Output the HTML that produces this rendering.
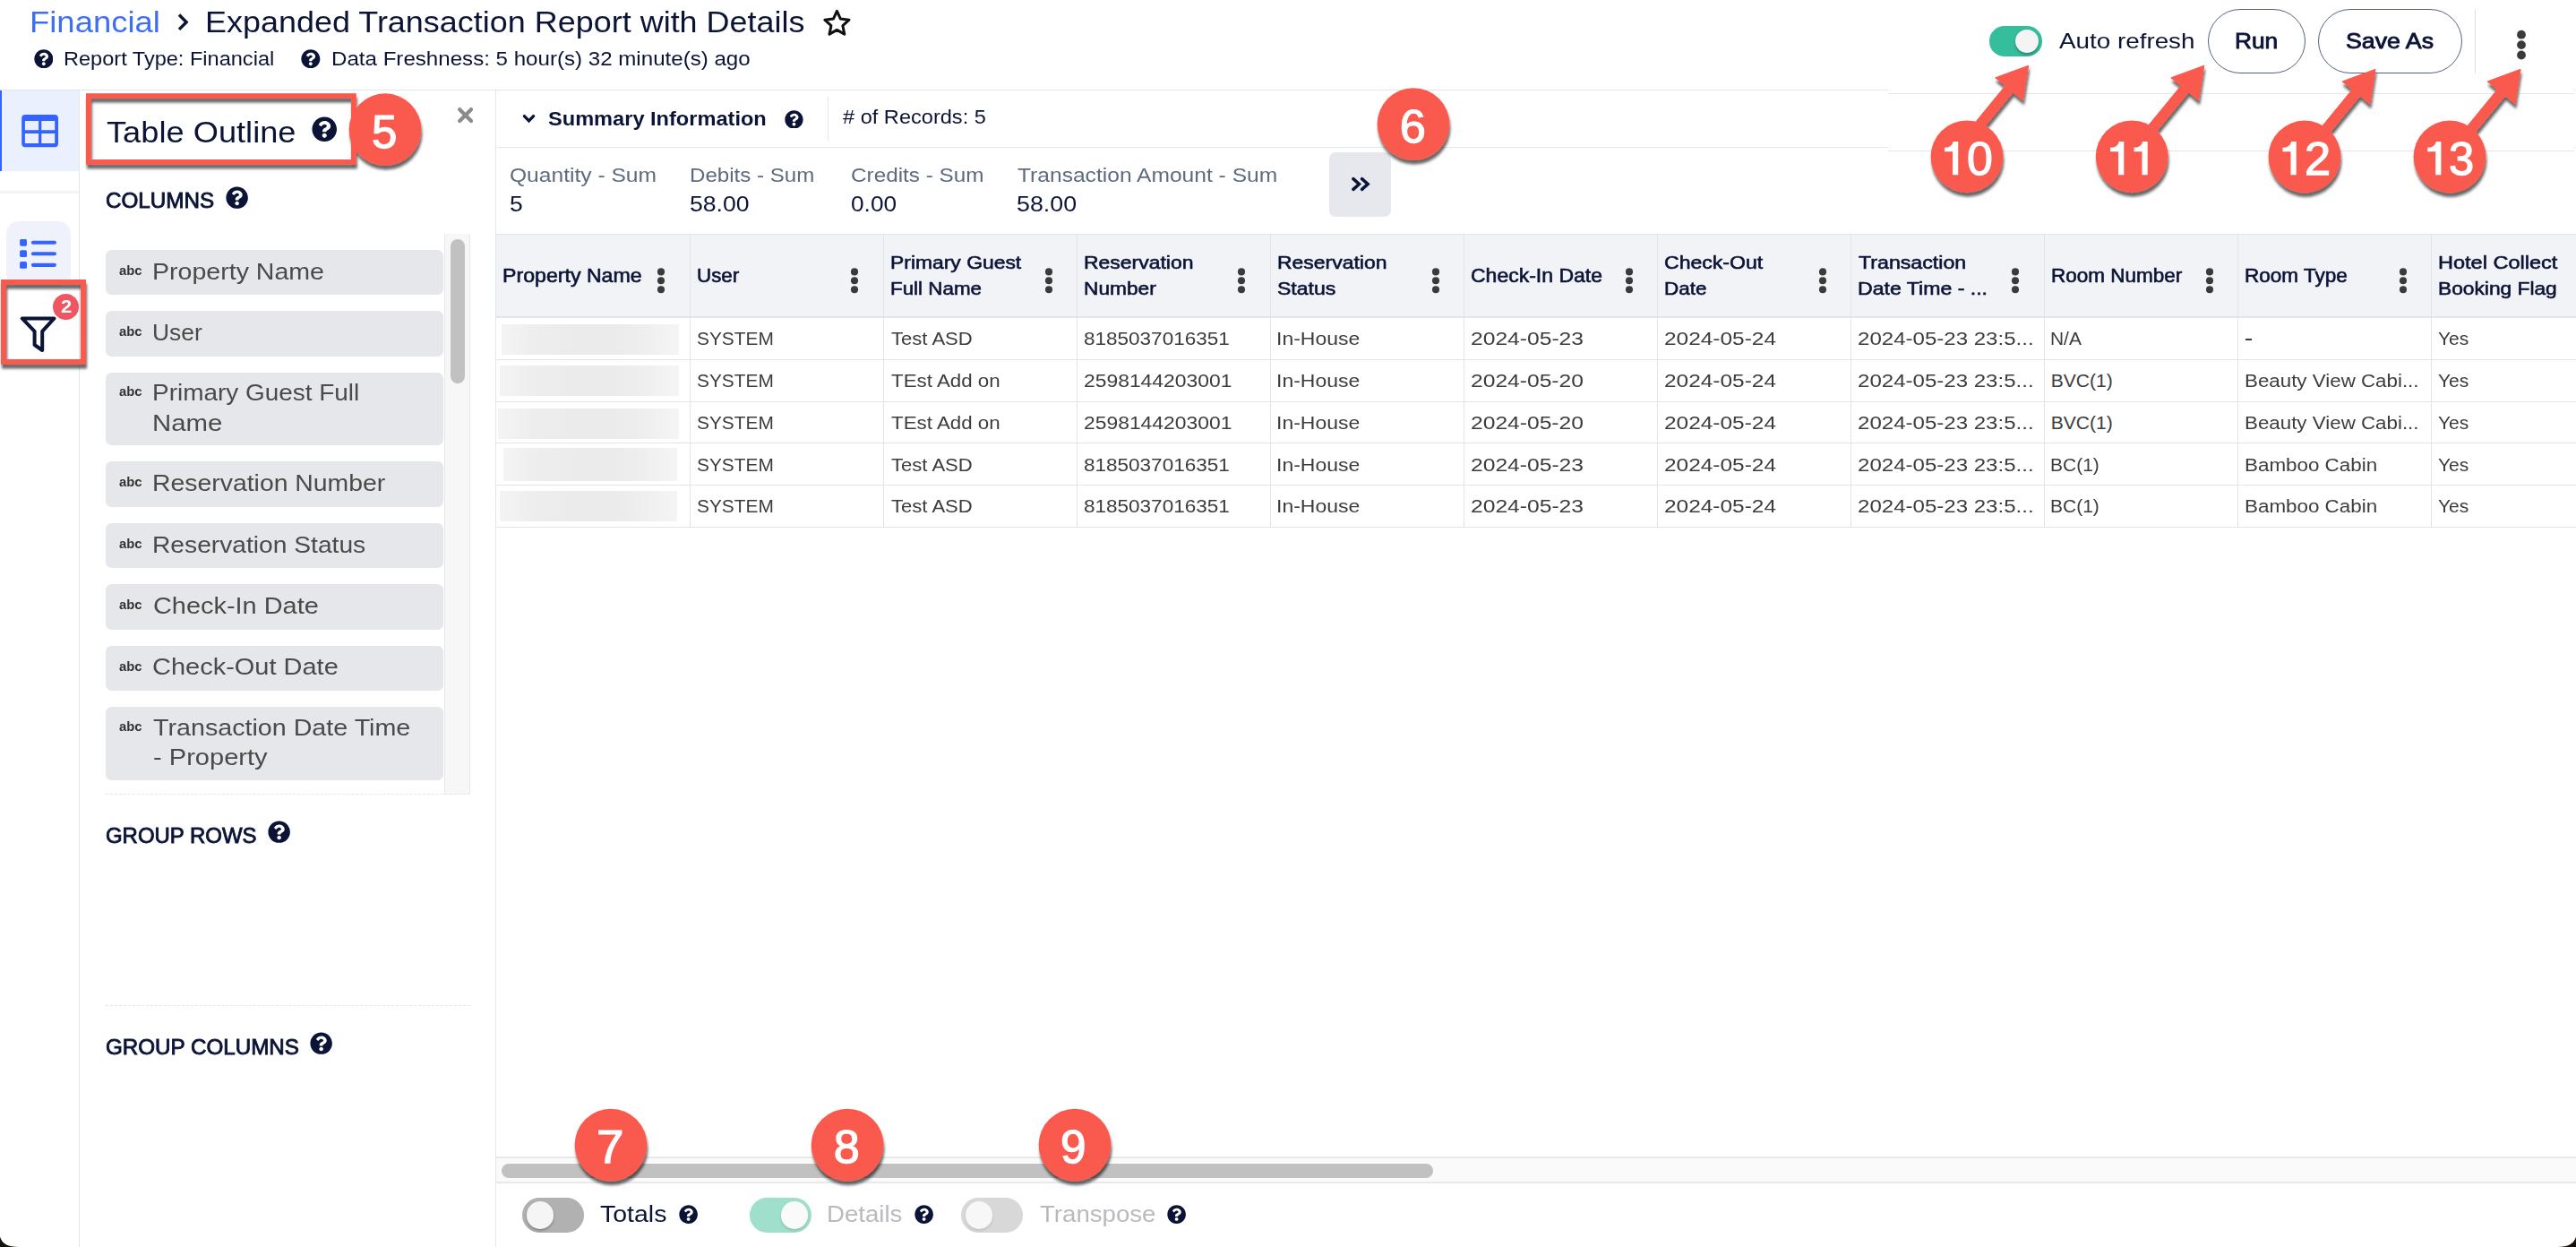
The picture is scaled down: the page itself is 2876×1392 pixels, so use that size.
<!DOCTYPE html>
<html><head><meta charset="utf-8"><title>Expanded Transaction Report with Details</title>
<style>
html,body{margin:0;padding:0;background:#fff;}
body{width:2876px;height:1392px;position:relative;overflow:hidden;font-family:"Liberation Sans",sans-serif;}
#root{position:absolute;left:0;top:0;width:2876px;height:1392px;overflow:hidden;}
#root>div,#root>svg,#root>span{position:absolute;}
.t{white-space:nowrap;line-height:1;transform-origin:0 0;display:block;}
</style></head><body><div id="root">
<div style="left:0px;top:99.75px;width:2108px;height:1.0px;background:#e4e6ee;"></div>
<div style="left:553px;top:163.75px;width:1555px;height:1.0px;background:#e4e6ee;"></div>
<div style="left:2874px;top:99.75px;width:2px;height:1.0px;background:#e4e6ee;"></div>
<div style="left:2874px;top:163.75px;width:2px;height:1.0px;background:#e4e6ee;"></div>
<div style="left:2108px;top:103.75px;width:766px;height:1.0px;background:#e4e6ee;"></div>
<div style="left:2108px;top:167.75px;width:766px;height:1.0px;background:#e4e6ee;"></div>
<div style="left:0px;top:100.75px;width:88px;height:90.25px;background:#eaf0fe;"></div>
<div style="left:0px;top:100.75px;width:2px;height:90.25px;background:#3563ff;"></div>
<div style="left:0px;top:213px;width:88px;height:2.6px;background:#f4f4f5;"></div>
<div style="left:7.2px;top:247.2px;width:71.7px;height:72.8px;background:#eff2fb;border-radius:14.4px;"></div>
<div style="left:88px;top:100.75px;width:1px;height:1291.25px;background:#e4e6ee;"></div>
<div style="left:552.8px;top:100.75px;width:1.0px;height:1291.25px;background:#e4e6ee;"></div>
<svg style="left:20px;top:124px" width="50" height="44" viewBox="20 124 50 44"><path fill="#3563ff" fill-rule="evenodd" d="M28.2 128.1H61a4 4 0 0 1 4 4V160.2a4 4 0 0 1-4 4H28.2a4 4 0 0 1-4-4V132.1a4 4 0 0 1 4-4ZM27.9 134.9V145.3H43.1V134.9ZM46.3 134.9V145.3H61.2V134.9ZM27.9 148.9V160H43.1V148.9ZM46.3 148.9V160H61.2V148.9Z"/></svg>
<svg style="left:20px;top:262px" width="50" height="42" viewBox="20 262 50 42"><g fill="#3563ff"><rect x="22.1" y="266.9" width="7.9" height="7.8" rx="1.6"/><rect x="22.1" y="279.2" width="7.9" height="7.8" rx="1.6"/><rect x="22.1" y="292" width="7.9" height="7.8" rx="1.6"/></g><g stroke="#3563ff" stroke-width="4.1" stroke-linecap="round"><path d="M36.9 270.75H60.9M36.9 283.3H60.9M36.9 295.85H60.9"/></g></svg>
<svg style="left:18px;top:348px" width="50" height="50" viewBox="18 348 50 50"><path d="M24.7 355.4H60.5L47.2 369.9V391L38.6 385V369.9Z" fill="none" stroke="#0b1437" stroke-width="4" stroke-linejoin="round"/></svg>
<div style="left:58.9px;top:327.8px;width:29.2px;height:29.2px;background:#ef5662;border-radius:50%;z-index:12;"></div>
<svg style="left:195px;top:14px" width="22" height="24" viewBox="195 14 22 24"><path d="M200 16.5L208.1 24.7L200 32.9" fill="none" stroke="#0b1437" stroke-width="3.4"/></svg>
<svg style="left:914px;top:6px" width="42" height="40" viewBox="914 6 42 40"><polygon points="934.40,12.30 938.40,21.10 948.00,22.18 940.87,28.70 942.81,38.17 934.40,33.40 925.99,38.17 927.93,28.70 920.80,22.18 930.40,21.10" fill="none" stroke="#111" stroke-width="3" stroke-linejoin="round"/></svg>
<svg style="left:37.77px;top:54.76px" width="21.67" height="21.67" viewBox="0 0 512 512"><path fill="#0b1437" d="M504 256c0 136.997-111.043 248-248 248S8 392.997 8 256C8 119.083 119.043 8 256 8s248 111.083 248 248zM262.655 90c-54.497 0-89.255 22.957-116.549 63.758-3.536 5.286-2.353 12.415 2.715 16.258l34.699 26.31c5.205 3.947 12.621 3.008 16.665-2.122 17.864-22.658 30.113-35.797 57.303-35.797 20.429 0 45.698 13.148 45.698 32.958 0 14.976-12.363 22.667-32.534 33.976C247.128 238.528 216 254.941 216 296v4c0 6.627 5.373 12 12 12h56c6.627 0 12-5.373 12-12v-1.333c0-28.462 83.186-29.647 83.186-106.667 0-58.002-60.165-102-116.531-102zM256 338c-25.365 0-46 20.635-46 46 0 25.364 20.635 46 46 46s46-20.636 46-46c0-25.365-20.635-46-46-46z"/></svg>
<svg style="left:336.27px;top:54.76px" width="21.67" height="21.67" viewBox="0 0 512 512"><path fill="#0b1437" d="M504 256c0 136.997-111.043 248-248 248S8 392.997 8 256C8 119.083 119.043 8 256 8s248 111.083 248 248zM262.655 90c-54.497 0-89.255 22.957-116.549 63.758-3.536 5.286-2.353 12.415 2.715 16.258l34.699 26.31c5.205 3.947 12.621 3.008 16.665-2.122 17.864-22.658 30.113-35.797 57.303-35.797 20.429 0 45.698 13.148 45.698 32.958 0 14.976-12.363 22.667-32.534 33.976C247.128 238.528 216 254.941 216 296v4c0 6.627 5.373 12 12 12h56c6.627 0 12-5.373 12-12v-1.333c0-28.462 83.186-29.647 83.186-106.667 0-58.002-60.165-102-116.531-102zM256 338c-25.365 0-46 20.635-46 46 0 25.364 20.635 46 46 46s46-20.636 46-46c0-25.365-20.635-46-46-46z"/></svg>
<svg style="left:348.26px;top:130.06px" width="28.48" height="28.48" viewBox="0 0 512 512"><path fill="#0b1437" d="M504 256c0 136.997-111.043 248-248 248S8 392.997 8 256C8 119.083 119.043 8 256 8s248 111.083 248 248zM262.655 90c-54.497 0-89.255 22.957-116.549 63.758-3.536 5.286-2.353 12.415 2.715 16.258l34.699 26.31c5.205 3.947 12.621 3.008 16.665-2.122 17.864-22.658 30.113-35.797 57.303-35.797 20.429 0 45.698 13.148 45.698 32.958 0 14.976-12.363 22.667-32.534 33.976C247.128 238.528 216 254.941 216 296v4c0 6.627 5.373 12 12 12h56c6.627 0 12-5.373 12-12v-1.333c0-28.462 83.186-29.647 83.186-106.667 0-58.002-60.165-102-116.531-102zM256 338c-25.365 0-46 20.635-46 46 0 25.364 20.635 46 46 46s46-20.636 46-46c0-25.365-20.635-46-46-46z"/></svg>
<svg style="left:506px;top:116px" width="28" height="26" viewBox="506 116 28 26"><path d="M513.2 122.15L526 134.95M526 122.15L513.2 134.95" stroke="#8b8b8b" stroke-width="4.3" stroke-linecap="round"/></svg>
<svg style="left:251.96px;top:208.16px" width="25.28" height="25.28" viewBox="0 0 512 512"><path fill="#0b1437" d="M504 256c0 136.997-111.043 248-248 248S8 392.997 8 256C8 119.083 119.043 8 256 8s248 111.083 248 248zM262.655 90c-54.497 0-89.255 22.957-116.549 63.758-3.536 5.286-2.353 12.415 2.715 16.258l34.699 26.31c5.205 3.947 12.621 3.008 16.665-2.122 17.864-22.658 30.113-35.797 57.303-35.797 20.429 0 45.698 13.148 45.698 32.958 0 14.976-12.363 22.667-32.534 33.976C247.128 238.528 216 254.941 216 296v4c0 6.627 5.373 12 12 12h56c6.627 0 12-5.373 12-12v-1.333c0-28.462 83.186-29.647 83.186-106.667 0-58.002-60.165-102-116.531-102zM256 338c-25.365 0-46 20.635-46 46 0 25.364 20.635 46 46 46s46-20.636 46-46c0-25.365-20.635-46-46-46z"/></svg>
<div style="left:495.5px;top:261px;width:29.0px;height:625.5px;background:#f7f7f7;border-left:1px solid #e8e8e8;border-right:1px solid #e8e8e8;box-sizing:border-box;"></div>
<div style="left:503.3px;top:267px;width:15.7px;height:161.3px;background:#c1c1c1;border-radius:8px;"></div>
<div style="left:118px;top:279.1px;width:376.6px;height:49.6px;background:#e6e7ea;border-radius:6.5px;"></div>
<div style="left:118px;top:346.9px;width:376.6px;height:51.0px;background:#e6e7ea;border-radius:6.5px;"></div>
<div style="left:118px;top:416px;width:376.6px;height:80.6px;background:#e6e7ea;border-radius:6.5px;"></div>
<div style="left:118px;top:515.1px;width:376.6px;height:50.7px;background:#e6e7ea;border-radius:6.5px;"></div>
<div style="left:118px;top:584px;width:376.6px;height:49.8px;background:#e6e7ea;border-radius:6.5px;"></div>
<div style="left:118px;top:652px;width:376.6px;height:51px;background:#e6e7ea;border-radius:6.5px;"></div>
<div style="left:118px;top:721px;width:376.6px;height:49.6px;background:#e6e7ea;border-radius:6.5px;"></div>
<div style="left:118px;top:789px;width:376.6px;height:81.8px;background:#e6e7ea;border-radius:6.5px;"></div>
<div style="left:118px;top:886px;width:406.5px;height:0;border-top:1.3px dashed #e3e5ea;"></div>
<div style="left:118px;top:1121.8px;width:406.5px;height:0;border-top:1.3px dashed #e3e5ea;"></div>
<svg style="left:299.06px;top:916.26px" width="25.28" height="25.28" viewBox="0 0 512 512"><path fill="#0b1437" d="M504 256c0 136.997-111.043 248-248 248S8 392.997 8 256C8 119.083 119.043 8 256 8s248 111.083 248 248zM262.655 90c-54.497 0-89.255 22.957-116.549 63.758-3.536 5.286-2.353 12.415 2.715 16.258l34.699 26.31c5.205 3.947 12.621 3.008 16.665-2.122 17.864-22.658 30.113-35.797 57.303-35.797 20.429 0 45.698 13.148 45.698 32.958 0 14.976-12.363 22.667-32.534 33.976C247.128 238.528 216 254.941 216 296v4c0 6.627 5.373 12 12 12h56c6.627 0 12-5.373 12-12v-1.333c0-28.462 83.186-29.647 83.186-106.667 0-58.002-60.165-102-116.531-102zM256 338c-25.365 0-46 20.635-46 46 0 25.364 20.635 46 46 46s46-20.636 46-46c0-25.365-20.635-46-46-46z"/></svg>
<svg style="left:345.96px;top:1151.96px" width="25.28" height="25.28" viewBox="0 0 512 512"><path fill="#0b1437" d="M504 256c0 136.997-111.043 248-248 248S8 392.997 8 256C8 119.083 119.043 8 256 8s248 111.083 248 248zM262.655 90c-54.497 0-89.255 22.957-116.549 63.758-3.536 5.286-2.353 12.415 2.715 16.258l34.699 26.31c5.205 3.947 12.621 3.008 16.665-2.122 17.864-22.658 30.113-35.797 57.303-35.797 20.429 0 45.698 13.148 45.698 32.958 0 14.976-12.363 22.667-32.534 33.976C247.128 238.528 216 254.941 216 296v4c0 6.627 5.373 12 12 12h56c6.627 0 12-5.373 12-12v-1.333c0-28.462 83.186-29.647 83.186-106.667 0-58.002-60.165-102-116.531-102zM256 338c-25.365 0-46 20.635-46 46 0 25.364 20.635 46 46 46s46-20.636 46-46c0-25.365-20.635-46-46-46z"/></svg>
<svg style="left:580px;top:124px" width="22" height="18" viewBox="580 124 22 18"><path d="M585.4 129.6L590.5 134.8L595.6 129.6" fill="none" stroke="#0b1437" stroke-width="3.3" stroke-linecap="round"/></svg>
<svg style="left:876.42px;top:122.53px" width="20.95" height="20.95" viewBox="0 0 512 512"><path fill="#0b1437" d="M504 256c0 136.997-111.043 248-248 248S8 392.997 8 256C8 119.083 119.043 8 256 8s248 111.083 248 248zM262.655 90c-54.497 0-89.255 22.957-116.549 63.758-3.536 5.286-2.353 12.415 2.715 16.258l34.699 26.31c5.205 3.947 12.621 3.008 16.665-2.122 17.864-22.658 30.113-35.797 57.303-35.797 20.429 0 45.698 13.148 45.698 32.958 0 14.976-12.363 22.667-32.534 33.976C247.128 238.528 216 254.941 216 296v4c0 6.627 5.373 12 12 12h56c6.627 0 12-5.373 12-12v-1.333c0-28.462 83.186-29.647 83.186-106.667 0-58.002-60.165-102-116.531-102zM256 338c-25.365 0-46 20.635-46 46 0 25.364 20.635 46 46 46s46-20.636 46-46c0-25.365-20.635-46-46-46z"/></svg>
<div style="left:924px;top:108px;width:1px;height:49px;background:#e4e6ee;"></div>
<div style="left:1483.9px;top:169.8px;width:69.2px;height:72.2px;background:#e6e8ee;border-radius:7px;"></div>
<svg style="left:1504px;top:194px" width="30" height="24" viewBox="1504 194 30 24"><path d="M1510.9 199.6L1517.4 205.5L1510.9 211.4M1520.6 199.6L1527.1 205.5L1520.6 211.4" fill="none" stroke="#0b1437" stroke-width="3.5" stroke-linecap="round"/></svg>
<div style="left:553.8px;top:261.25px;width:2322.2px;height:92.5px;background:#f2f3f6;"></div>
<div style="left:553.8px;top:260.5px;width:2322.2px;height:1.7px;background:#e2e4ea;"></div>
<div style="left:553.8px;top:352.8px;width:2322.2px;height:1.9px;background:#e2e4ea;"></div>
<div style="left:553.8px;top:400.55px;width:2322.2px;height:1.4px;background:#e2e4ea;"></div>
<div style="left:553.8px;top:447.55px;width:2322.2px;height:1.4px;background:#e2e4ea;"></div>
<div style="left:553.8px;top:493.90000000000003px;width:2322.2px;height:1.4px;background:#e2e4ea;"></div>
<div style="left:553.8px;top:540.55px;width:2322.2px;height:1.4px;background:#e2e4ea;"></div>
<div style="left:553.8px;top:587.55px;width:2322.2px;height:1.4px;background:#e2e4ea;"></div>
<div style="left:769.55px;top:261.25px;width:1.4px;height:327.0px;background:#e2e4ea;"></div>
<div style="left:985.55px;top:261.25px;width:1.4px;height:327.0px;background:#e2e4ea;"></div>
<div style="left:1201.8px;top:261.25px;width:1.4px;height:327.0px;background:#e2e4ea;"></div>
<div style="left:1417.55px;top:261.25px;width:1.4px;height:327.0px;background:#e2e4ea;"></div>
<div style="left:1633.8px;top:261.25px;width:1.4px;height:327.0px;background:#e2e4ea;"></div>
<div style="left:1849.8px;top:261.25px;width:1.4px;height:327.0px;background:#e2e4ea;"></div>
<div style="left:2065.8px;top:261.25px;width:1.4px;height:327.0px;background:#e2e4ea;"></div>
<div style="left:2281.55px;top:261.25px;width:1.4px;height:327.0px;background:#e2e4ea;"></div>
<div style="left:2497.8px;top:261.25px;width:1.4px;height:327.0px;background:#e2e4ea;"></div>
<div style="left:2713.8px;top:261.25px;width:1.4px;height:327.0px;background:#e2e4ea;"></div>
<svg style="left:732.3px;top:296px" width="12" height="34" viewBox="-6 296 12 34"><g fill="#3a3a3a"><circle cx="0" cy="303.4" r="4.05"/><circle cx="0" cy="313.3" r="4.05"/><circle cx="0" cy="323.2" r="4.05"/></g></svg>
<svg style="left:948.3px;top:296px" width="12" height="34" viewBox="-6 296 12 34"><g fill="#3a3a3a"><circle cx="0" cy="303.4" r="4.05"/><circle cx="0" cy="313.3" r="4.05"/><circle cx="0" cy="323.2" r="4.05"/></g></svg>
<svg style="left:1164.55px;top:296px" width="12" height="34" viewBox="-6 296 12 34"><g fill="#3a3a3a"><circle cx="0" cy="303.4" r="4.05"/><circle cx="0" cy="313.3" r="4.05"/><circle cx="0" cy="323.2" r="4.05"/></g></svg>
<svg style="left:1380.3px;top:296px" width="12" height="34" viewBox="-6 296 12 34"><g fill="#3a3a3a"><circle cx="0" cy="303.4" r="4.05"/><circle cx="0" cy="313.3" r="4.05"/><circle cx="0" cy="323.2" r="4.05"/></g></svg>
<svg style="left:1596.55px;top:296px" width="12" height="34" viewBox="-6 296 12 34"><g fill="#3a3a3a"><circle cx="0" cy="303.4" r="4.05"/><circle cx="0" cy="313.3" r="4.05"/><circle cx="0" cy="323.2" r="4.05"/></g></svg>
<svg style="left:1812.55px;top:296px" width="12" height="34" viewBox="-6 296 12 34"><g fill="#3a3a3a"><circle cx="0" cy="303.4" r="4.05"/><circle cx="0" cy="313.3" r="4.05"/><circle cx="0" cy="323.2" r="4.05"/></g></svg>
<svg style="left:2028.55px;top:296px" width="12" height="34" viewBox="-6 296 12 34"><g fill="#3a3a3a"><circle cx="0" cy="303.4" r="4.05"/><circle cx="0" cy="313.3" r="4.05"/><circle cx="0" cy="323.2" r="4.05"/></g></svg>
<svg style="left:2244.3px;top:296px" width="12" height="34" viewBox="-6 296 12 34"><g fill="#3a3a3a"><circle cx="0" cy="303.4" r="4.05"/><circle cx="0" cy="313.3" r="4.05"/><circle cx="0" cy="323.2" r="4.05"/></g></svg>
<svg style="left:2460.55px;top:296px" width="12" height="34" viewBox="-6 296 12 34"><g fill="#3a3a3a"><circle cx="0" cy="303.4" r="4.05"/><circle cx="0" cy="313.3" r="4.05"/><circle cx="0" cy="323.2" r="4.05"/></g></svg>
<svg style="left:2676.55px;top:296px" width="12" height="34" viewBox="-6 296 12 34"><g fill="#3a3a3a"><circle cx="0" cy="303.4" r="4.05"/><circle cx="0" cy="313.3" r="4.05"/><circle cx="0" cy="323.2" r="4.05"/></g></svg>
<div style="left:2507.1px;top:378.4px;width:7.4px;height:1.6px;background:#3c3c3c;"></div>
<div style="left:560px;top:362.1px;width:197.8px;height:33.7px;background:linear-gradient(90deg,#f4f4f4 0%,#eeeeee 18%,#ebebeb 40%,#ebebeb 65%,#f0f0f0 85%,#f5f5f5 100%);"></div>
<div style="left:558.1px;top:407.9px;width:199.7px;height:33.7px;background:linear-gradient(90deg,#f4f4f4 0%,#eeeeee 18%,#ebebeb 40%,#ebebeb 65%,#f0f0f0 85%,#f5f5f5 100%);"></div>
<div style="left:556.2px;top:456px;width:201.6px;height:33.7px;background:linear-gradient(90deg,#f4f4f4 0%,#eeeeee 18%,#ebebeb 40%,#ebebeb 65%,#f0f0f0 85%,#f5f5f5 100%);"></div>
<div style="left:561.9px;top:499.9px;width:194.0px;height:37.5px;background:linear-gradient(90deg,#f4f4f4 0%,#eeeeee 18%,#ebebeb 40%,#ebebeb 65%,#f0f0f0 85%,#f5f5f5 100%);"></div>
<div style="left:558.1px;top:548px;width:197.8px;height:33.7px;background:linear-gradient(90deg,#f4f4f4 0%,#eeeeee 18%,#ebebeb 40%,#ebebeb 65%,#f0f0f0 85%,#f5f5f5 100%);"></div>
<div style="left:553.8px;top:1291px;width:2322.2px;height:30px;background:#fafafa;border-top:2px solid #e9e9e9;border-bottom:2px solid #e9e9e9;box-sizing:border-box;"></div>
<div style="left:560px;top:1299.25px;width:1040px;height:15.75px;background:#c1c1c1;border-radius:8px;"></div>
<div style="left:583px;top:1337.2px;width:68.8px;height:38.5px;background:#b1b1b1;border-radius:19.25px;"></div>
<div style="left:587.65px;top:1341.3px;width:30.3px;height:30.3px;background:#f5f5f5;border-radius:50%;box-shadow:0 2px 3px rgba(0,0,0,.25);"></div>
<svg style="left:758.07px;top:1345.27px" width="21.26" height="21.26" viewBox="0 0 512 512"><path fill="#0b1437" d="M504 256c0 136.997-111.043 248-248 248S8 392.997 8 256C8 119.083 119.043 8 256 8s248 111.083 248 248zM262.655 90c-54.497 0-89.255 22.957-116.549 63.758-3.536 5.286-2.353 12.415 2.715 16.258l34.699 26.31c5.205 3.947 12.621 3.008 16.665-2.122 17.864-22.658 30.113-35.797 57.303-35.797 20.429 0 45.698 13.148 45.698 32.958 0 14.976-12.363 22.667-32.534 33.976C247.128 238.528 216 254.941 216 296v4c0 6.627 5.373 12 12 12h56c6.627 0 12-5.373 12-12v-1.333c0-28.462 83.186-29.647 83.186-106.667 0-58.002-60.165-102-116.531-102zM256 338c-25.365 0-46 20.635-46 46 0 25.364 20.635 46 46 46s46-20.636 46-46c0-25.365-20.635-46-46-46z"/></svg>
<div style="left:837px;top:1337.2px;width:69px;height:38.5px;background:#9fdfcc;border-radius:19.25px;"></div>
<div style="left:871.65px;top:1341.3px;width:30.3px;height:30.3px;background:#fafafa;border-radius:50%;box-shadow:0 2px 3px rgba(0,0,0,.12);"></div>
<svg style="left:1020.87px;top:1345.27px" width="21.26" height="21.26" viewBox="0 0 512 512"><path fill="#0b1437" d="M504 256c0 136.997-111.043 248-248 248S8 392.997 8 256C8 119.083 119.043 8 256 8s248 111.083 248 248zM262.655 90c-54.497 0-89.255 22.957-116.549 63.758-3.536 5.286-2.353 12.415 2.715 16.258l34.699 26.31c5.205 3.947 12.621 3.008 16.665-2.122 17.864-22.658 30.113-35.797 57.303-35.797 20.429 0 45.698 13.148 45.698 32.958 0 14.976-12.363 22.667-32.534 33.976C247.128 238.528 216 254.941 216 296v4c0 6.627 5.373 12 12 12h56c6.627 0 12-5.373 12-12v-1.333c0-28.462 83.186-29.647 83.186-106.667 0-58.002-60.165-102-116.531-102zM256 338c-25.365 0-46 20.635-46 46 0 25.364 20.635 46 46 46s46-20.636 46-46c0-25.365-20.635-46-46-46z"/></svg>
<div style="left:1073px;top:1337.2px;width:68.8px;height:38.5px;background:#d8d8d8;border-radius:19.25px;"></div>
<div style="left:1077.6499999999999px;top:1341.3px;width:30.3px;height:30.3px;background:#f7f7f7;border-radius:50%;box-shadow:0 2px 3px rgba(0,0,0,.10);"></div>
<svg style="left:1303.37px;top:1345.27px" width="21.26" height="21.26" viewBox="0 0 512 512"><path fill="#0b1437" d="M504 256c0 136.997-111.043 248-248 248S8 392.997 8 256C8 119.083 119.043 8 256 8s248 111.083 248 248zM262.655 90c-54.497 0-89.255 22.957-116.549 63.758-3.536 5.286-2.353 12.415 2.715 16.258l34.699 26.31c5.205 3.947 12.621 3.008 16.665-2.122 17.864-22.658 30.113-35.797 57.303-35.797 20.429 0 45.698 13.148 45.698 32.958 0 14.976-12.363 22.667-32.534 33.976C247.128 238.528 216 254.941 216 296v4c0 6.627 5.373 12 12 12h56c6.627 0 12-5.373 12-12v-1.333c0-28.462 83.186-29.647 83.186-106.667 0-58.002-60.165-102-116.531-102zM256 338c-25.365 0-46 20.635-46 46 0 25.364 20.635 46 46 46s46-20.636 46-46c0-25.365-20.635-46-46-46z"/></svg>
<div style="left:2221.25px;top:29.2px;width:59.0px;height:33.5px;background:#34be9c;border-radius:16.75px;"></div>
<div style="left:2250.2px;top:32.95px;width:26.0px;height:26.0px;background:#f4f4f4;border-radius:50%;box-shadow:0 2px 3px rgba(0,0,0,.3);"></div>
<div style="left:2465px;top:10px;width:108.75px;height:71.75px;border:1.3px solid #55627e;border-radius:36px;box-sizing:border-box;"></div>
<div style="left:2588.3px;top:10px;width:160.3px;height:71.75px;border:1.3px solid #55627e;border-radius:36px;box-sizing:border-box;"></div>
<div style="left:2763.2px;top:10px;width:1.3px;height:71.7px;background:#dcdfe7;"></div>
<svg style="left:2808px;top:30px" width="14" height="40" viewBox="2808 30 14 40"><g fill="#3a3a3a"><circle cx="2815" cy="38.7" r="4.9"/><circle cx="2815" cy="50.1" r="4.9"/><circle cx="2815" cy="61.5" r="4.9"/></g></svg>
<svg style="left:0;top:0;z-index:10" width="2876" height="1392" viewBox="0 0 2876 1392"><defs><filter id="ds" x="-5%" y="-5%" width="110%" height="110%"><feDropShadow dx="1" dy="4.5" stdDeviation="1.5" flood-color="#000" flood-opacity="0.6"/></filter></defs><g filter="url(#ds)" fill="#fa5a4d" stroke="#fa5a4d"><polygon points="2264.70,73.20 2227.67,86.81 2238.73,95.87 2196.88,146.91 2205.69,154.13 2247.55,103.10 2258.60,112.17"/><polygon points="2460.80,73.20 2423.77,86.81 2434.83,95.87 2392.98,146.91 2401.79,154.13 2443.65,103.10 2454.70,112.17"/><polygon points="2652.10,77.30 2615.07,90.91 2626.13,99.97 2584.28,151.01 2593.09,158.23 2634.95,107.20 2646.00,116.27"/><polygon points="2814.10,77.30 2777.07,90.91 2788.13,99.97 2746.28,151.01 2755.09,158.23 2796.95,107.20 2808.00,116.27"/><rect x="98.9" y="107.1" width="296" height="73.85" fill="none" stroke-width="5.8"/><rect x="4" y="315" width="89" height="89" fill="none" stroke-width="6"/><circle cx="430" cy="144.7" r="40.4" stroke="none"/><circle cx="1578" cy="138.6" r="40.4" stroke="none"/><circle cx="682" cy="1278.1" r="40.4" stroke="none"/><circle cx="946.1" cy="1278.1" r="40.4" stroke="none"/><circle cx="1200" cy="1278.1" r="40.4" stroke="none"/><circle cx="2196" cy="174.8" r="40.4" stroke="none"/><circle cx="2380.2" cy="174.8" r="40.4" stroke="none"/><circle cx="2573" cy="175" r="40.4" stroke="none"/><circle cx="2735" cy="175" r="40.4" stroke="none"/></g></svg>
<svg style="left:2150px;top:150px;z-index:20" width="620" height="55" viewBox="2150 150 620 55"><g fill="#fff"><path d="M2180.77 157.90L2186.22 157.90L2186.22 195.35L2180.04 195.35L2180.04 169.24L2171.06 169.24L2171.06 164.75Q2179.20 164.75 2180.77 157.90Z"/><path d="M2365.83 157.90L2371.28 157.90L2371.28 195.35L2365.10 195.35L2365.10 169.24L2356.12 169.24L2356.12 164.75Q2364.26 164.75 2365.83 157.90Z"/><path d="M2392.23 157.90L2397.68 157.90L2397.68 195.35L2391.50 195.35L2391.50 169.24L2382.52 169.24L2382.52 164.75Q2390.66 164.75 2392.23 157.90Z"/><path d="M2558.23 157.90L2563.68 157.90L2563.68 195.35L2557.50 195.35L2557.50 169.24L2548.52 169.24L2548.52 164.75Q2556.66 164.75 2558.23 157.90Z"/><path d="M2719.93 157.90L2725.38 157.90L2725.38 195.35L2719.20 195.35L2719.20 169.24L2710.22 169.24L2710.22 164.75Q2718.36 164.75 2719.93 157.90Z"/></g></svg>
<svg style="left:0;top:1370px;z-index:30" width="30" height="22" viewBox="0 1370 30 22"><path d="M0 1380.5Q3 1392 21 1392H0Z" fill="#15110d"/></svg>
<svg style="left:2846px;top:1370px;z-index:30" width="30" height="22" viewBox="2846 1370 30 22"><path d="M2876 1380.5Q2873 1392 2855 1392H2876Z" fill="#15110d"/></svg>
<span class="t" style="left:68.49px;top:333.00px;font-size:19.77px;color:#fff;font-weight:700;transform:scaleX(1.1115);z-index:13;">2</span>
<span class="t" style="left:32.75px;top:8.00px;font-size:33.14px;color:#3d6ff2;transform:scaleX(1.1006);">Financial</span>
<span class="t" style="left:229.32px;top:8.00px;font-size:33.14px;color:#0b1437;transform:scaleX(1.0854);">Expanded Transaction Report with Details</span>
<span class="t" style="left:71.25px;top:55.00px;font-size:22.17px;color:#0b1437;transform:scaleX(1.0630);">Report Type: Financial</span>
<span class="t" style="left:369.67px;top:55.00px;font-size:22.17px;color:#0b1437;transform:scaleX(1.0882);">Data Freshness: 5 hour(s) 32 minute(s) ago</span>
<span class="t" style="left:119.15px;top:131.00px;font-size:33.07px;color:#0b1437;transform:scaleX(1.0961);">Table Outline</span>
<span class="t" style="left:118.26px;top:213.00px;font-size:23.26px;color:#0b1437;-webkit-text-stroke:0.85px #0b1437;transform:scaleX(1.0427);">COLUMNS</span>
<span class="t" style="left:133.37px;top:294.00px;font-size:15.1px;color:#333;font-weight:700;transform:scaleX(0.9840);">abc</span>
<span class="t" style="left:170.31px;top:291.00px;font-size:25.73px;color:#4a4a4a;transform:scaleX(1.1101);">Property Name</span>
<span class="t" style="left:133.37px;top:362.00px;font-size:15.1px;color:#333;font-weight:700;transform:scaleX(0.9840);">abc</span>
<span class="t" style="left:169.97px;top:359.00px;font-size:25.73px;color:#4a4a4a;transform:scaleX(1.0259);">User</span>
<span class="t" style="left:133.37px;top:429.00px;font-size:15.1px;color:#333;font-weight:700;transform:scaleX(0.9840);">abc</span>
<span class="t" style="left:170.43px;top:426.00px;font-size:25.73px;color:#4a4a4a;transform:scaleX(1.0859);">Primary Guest Full</span>
<span class="t" style="left:170.15px;top:460.00px;font-size:25.73px;color:#4a4a4a;transform:scaleX(1.1413);">Name</span>
<span class="t" style="left:133.37px;top:530.00px;font-size:15.1px;color:#333;font-weight:700;transform:scaleX(0.9840);">abc</span>
<span class="t" style="left:170.34px;top:527.00px;font-size:25.73px;color:#4a4a4a;transform:scaleX(1.1036);">Reservation Number</span>
<span class="t" style="left:133.37px;top:599.00px;font-size:15.1px;color:#333;font-weight:700;transform:scaleX(0.9840);">abc</span>
<span class="t" style="left:170.39px;top:596.00px;font-size:25.73px;color:#4a4a4a;transform:scaleX(1.0963);">Reservation Status</span>
<span class="t" style="left:133.37px;top:667.00px;font-size:15.1px;color:#333;font-weight:700;transform:scaleX(0.9840);">abc</span>
<span class="t" style="left:171.11px;top:664.00px;font-size:25.73px;color:#4a4a4a;transform:scaleX(1.1239);">Check-In Date</span>
<span class="t" style="left:133.37px;top:736.00px;font-size:15.1px;color:#333;font-weight:700;transform:scaleX(0.9840);">abc</span>
<span class="t" style="left:170.11px;top:732.00px;font-size:25.73px;color:#4a4a4a;transform:scaleX(1.1268);">Check-Out Date</span>
<span class="t" style="left:133.37px;top:803.00px;font-size:15.1px;color:#333;font-weight:700;transform:scaleX(0.9840);">abc</span>
<span class="t" style="left:171.26px;top:800.00px;font-size:25.73px;color:#4a4a4a;transform:scaleX(1.1146);">Transaction Date Time</span>
<span class="t" style="left:171.47px;top:833.00px;font-size:25.73px;color:#4a4a4a;transform:scaleX(1.1300);">- Property</span>
<span class="t" style="left:118.09px;top:922.00px;font-size:23.33px;color:#0b1437;-webkit-text-stroke:0.85px #0b1437;transform:scaleX(1.0262);">GROUP ROWS</span>
<span class="t" style="left:118.07px;top:1158.00px;font-size:23.33px;color:#0b1437;-webkit-text-stroke:0.85px #0b1437;transform:scaleX(1.0369);">GROUP COLUMNS</span>
<span class="t" style="left:611.79px;top:123.00px;font-size:21.37px;color:#0b1437;font-weight:700;transform:scaleX(1.1043);">Summary Information</span>
<span class="t" style="left:940.62px;top:120.00px;font-size:22.53px;color:#0b1437;transform:scaleX(1.0469);"># of Records: 5</span>
<span class="t" style="left:568.88px;top:185.00px;font-size:21.8px;color:#5e6a7e;transform:scaleX(1.1278);">Quantity - Sum</span>
<span class="t" style="left:568.82px;top:216.00px;font-size:24.35px;color:#0b1437;transform:scaleX(1.0864);">5</span>
<span class="t" style="left:769.90px;top:185.00px;font-size:21.8px;color:#5e6a7e;transform:scaleX(1.1055);">Debits - Sum</span>
<span class="t" style="left:769.68px;top:216.00px;font-size:24.35px;color:#0b1437;transform:scaleX(1.0921);">58.00</span>
<span class="t" style="left:950.25px;top:185.00px;font-size:21.8px;color:#5e6a7e;transform:scaleX(1.1152);">Credits - Sum</span>
<span class="t" style="left:949.68px;top:216.00px;font-size:24.35px;color:#0b1437;transform:scaleX(1.0781);">0.00</span>
<span class="t" style="left:1136.34px;top:185.00px;font-size:21.8px;color:#5e6a7e;transform:scaleX(1.1282);">Transaction Amount - Sum</span>
<span class="t" style="left:1134.92px;top:216.00px;font-size:24.35px;color:#0b1437;transform:scaleX(1.1004);">58.00</span>
<span class="t" style="left:561.06px;top:297.00px;font-size:21.22px;color:#0b1437;-webkit-text-stroke:0.6px #0b1437;transform:scaleX(1.0905);">Property Name</span>
<span class="t" style="left:777.90px;top:297.00px;font-size:21.22px;color:#0b1437;-webkit-text-stroke:0.6px #0b1437;transform:scaleX(1.0536);">User</span>
<span class="t" style="left:993.59px;top:282.00px;font-size:21.08px;color:#0b1437;-webkit-text-stroke:0.6px #0b1437;transform:scaleX(1.0854);">Primary Guest</span>
<span class="t" style="left:993.68px;top:311.00px;font-size:21.08px;color:#0b1437;-webkit-text-stroke:0.6px #0b1437;transform:scaleX(1.0620);">Full Name</span>
<span class="t" style="left:1210.34px;top:282.00px;font-size:21.08px;color:#0b1437;-webkit-text-stroke:0.6px #0b1437;transform:scaleX(1.0885);">Reservation</span>
<span class="t" style="left:1210.37px;top:311.00px;font-size:21.08px;color:#0b1437;-webkit-text-stroke:0.6px #0b1437;transform:scaleX(1.0765);">Number</span>
<span class="t" style="left:1425.58px;top:282.00px;font-size:21.08px;color:#0b1437;-webkit-text-stroke:0.6px #0b1437;transform:scaleX(1.0885);">Reservation</span>
<span class="t" style="left:1426.45px;top:311.00px;font-size:21.08px;color:#0b1437;-webkit-text-stroke:0.6px #0b1437;transform:scaleX(1.0930);">Status</span>
<span class="t" style="left:1642.18px;top:297.00px;font-size:21.22px;color:#0b1437;-webkit-text-stroke:0.6px #0b1437;transform:scaleX(1.0836);">Check-In Date</span>
<span class="t" style="left:1858.15px;top:282.00px;font-size:21.08px;color:#0b1437;-webkit-text-stroke:0.6px #0b1437;transform:scaleX(1.0940);">Check-Out</span>
<span class="t" style="left:1858.42px;top:311.00px;font-size:21.08px;color:#0b1437;-webkit-text-stroke:0.6px #0b1437;transform:scaleX(1.0656);">Date</span>
<span class="t" style="left:2075.01px;top:282.00px;font-size:21.08px;color:#0b1437;-webkit-text-stroke:0.6px #0b1437;transform:scaleX(1.0993);">Transaction</span>
<span class="t" style="left:2074.31px;top:311.00px;font-size:21.08px;color:#0b1437;-webkit-text-stroke:0.6px #0b1437;transform:scaleX(1.0954);">Date Time - ...</span>
<span class="t" style="left:2289.69px;top:297.00px;font-size:21.22px;color:#0b1437;-webkit-text-stroke:0.6px #0b1437;transform:scaleX(1.0600);">Room Number</span>
<span class="t" style="left:2506.43px;top:297.00px;font-size:21.22px;color:#0b1437;-webkit-text-stroke:0.6px #0b1437;transform:scaleX(1.0614);">Room Type</span>
<span class="t" style="left:2722.23px;top:282.00px;font-size:21.08px;color:#0b1437;-webkit-text-stroke:0.6px #0b1437;transform:scaleX(1.1153);">Hotel Collect</span>
<span class="t" style="left:2722.37px;top:311.00px;font-size:21.08px;color:#0b1437;-webkit-text-stroke:0.6px #0b1437;transform:scaleX(1.0790);">Booking Flag</span>
<span class="t" style="left:777.93px;top:367.00px;font-size:21.08px;color:#3c3c3c;transform:scaleX(0.9904);">SYSTEM</span>
<span class="t" style="left:994.71px;top:367.00px;font-size:21.08px;color:#3c3c3c;transform:scaleX(1.0468);">Test ASD</span>
<span class="t" style="left:1210.18px;top:367.00px;font-size:21.08px;color:#3c3c3c;transform:scaleX(1.0680);">8185037016351</span>
<span class="t" style="left:1425.25px;top:367.00px;font-size:21.08px;color:#3c3c3c;transform:scaleX(1.0898);">In-House</span>
<span class="t" style="left:1641.72px;top:367.00px;font-size:21.08px;color:#3c3c3c;transform:scaleX(1.1685);">2024-05-23</span>
<span class="t" style="left:1857.76px;top:367.00px;font-size:21.08px;color:#3c3c3c;transform:scaleX(1.1595);">2024-05-24</span>
<span class="t" style="left:2073.79px;top:367.00px;font-size:21.08px;color:#3c3c3c;transform:scaleX(1.1411);">2024-05-23 23:5...</span>
<span class="t" style="left:2289.40px;top:367.00px;font-size:21.08px;color:#3c3c3c;transform:scaleX(0.9935);">N/A</span>
<span class="t" style="left:2722.33px;top:367.00px;font-size:21.08px;color:#3c3c3c;transform:scaleX(0.9968);">Yes</span>
<span class="t" style="left:777.93px;top:414.00px;font-size:21.08px;color:#3c3c3c;transform:scaleX(0.9904);">SYSTEM</span>
<span class="t" style="left:994.69px;top:414.00px;font-size:21.08px;color:#3c3c3c;transform:scaleX(1.0596);">TEst Add on</span>
<span class="t" style="left:1209.94px;top:414.00px;font-size:21.08px;color:#3c3c3c;transform:scaleX(1.0852);">2598144203001</span>
<span class="t" style="left:1425.25px;top:414.00px;font-size:21.08px;color:#3c3c3c;transform:scaleX(1.0898);">In-House</span>
<span class="t" style="left:1641.74px;top:414.00px;font-size:21.08px;color:#3c3c3c;transform:scaleX(1.1680);">2024-05-20</span>
<span class="t" style="left:1857.76px;top:414.00px;font-size:21.08px;color:#3c3c3c;transform:scaleX(1.1595);">2024-05-24</span>
<span class="t" style="left:2073.79px;top:414.00px;font-size:21.08px;color:#3c3c3c;transform:scaleX(1.1411);">2024-05-23 23:5...</span>
<span class="t" style="left:2289.68px;top:414.00px;font-size:21.08px;color:#3c3c3c;">BVC(1)</span>
<span class="t" style="left:2506.33px;top:414.00px;font-size:21.08px;color:#3c3c3c;transform:scaleX(1.0597);">Beauty View Cabi...</span>
<span class="t" style="left:2722.33px;top:414.00px;font-size:21.08px;color:#3c3c3c;transform:scaleX(0.9968);">Yes</span>
<span class="t" style="left:777.93px;top:461.00px;font-size:21.08px;color:#3c3c3c;transform:scaleX(0.9904);">SYSTEM</span>
<span class="t" style="left:994.69px;top:461.00px;font-size:21.08px;color:#3c3c3c;transform:scaleX(1.0596);">TEst Add on</span>
<span class="t" style="left:1209.94px;top:461.00px;font-size:21.08px;color:#3c3c3c;transform:scaleX(1.0852);">2598144203001</span>
<span class="t" style="left:1425.25px;top:461.00px;font-size:21.08px;color:#3c3c3c;transform:scaleX(1.0898);">In-House</span>
<span class="t" style="left:1641.74px;top:461.00px;font-size:21.08px;color:#3c3c3c;transform:scaleX(1.1680);">2024-05-20</span>
<span class="t" style="left:1857.76px;top:461.00px;font-size:21.08px;color:#3c3c3c;transform:scaleX(1.1595);">2024-05-24</span>
<span class="t" style="left:2073.79px;top:461.00px;font-size:21.08px;color:#3c3c3c;transform:scaleX(1.1411);">2024-05-23 23:5...</span>
<span class="t" style="left:2289.68px;top:461.00px;font-size:21.08px;color:#3c3c3c;">BVC(1)</span>
<span class="t" style="left:2506.33px;top:461.00px;font-size:21.08px;color:#3c3c3c;transform:scaleX(1.0597);">Beauty View Cabi...</span>
<span class="t" style="left:2722.33px;top:461.00px;font-size:21.08px;color:#3c3c3c;transform:scaleX(0.9968);">Yes</span>
<span class="t" style="left:777.93px;top:508.00px;font-size:21.08px;color:#3c3c3c;transform:scaleX(0.9904);">SYSTEM</span>
<span class="t" style="left:994.71px;top:508.00px;font-size:21.08px;color:#3c3c3c;transform:scaleX(1.0468);">Test ASD</span>
<span class="t" style="left:1210.18px;top:508.00px;font-size:21.08px;color:#3c3c3c;transform:scaleX(1.0680);">8185037016351</span>
<span class="t" style="left:1425.25px;top:508.00px;font-size:21.08px;color:#3c3c3c;transform:scaleX(1.0898);">In-House</span>
<span class="t" style="left:1641.72px;top:508.00px;font-size:21.08px;color:#3c3c3c;transform:scaleX(1.1685);">2024-05-23</span>
<span class="t" style="left:1857.76px;top:508.00px;font-size:21.08px;color:#3c3c3c;transform:scaleX(1.1595);">2024-05-24</span>
<span class="t" style="left:2073.79px;top:508.00px;font-size:21.08px;color:#3c3c3c;transform:scaleX(1.1411);">2024-05-23 23:5...</span>
<span class="t" style="left:2289.41px;top:508.00px;font-size:21.08px;color:#3c3c3c;transform:scaleX(0.9954);">BC(1)</span>
<span class="t" style="left:2506.33px;top:508.00px;font-size:21.08px;color:#3c3c3c;transform:scaleX(1.0623);">Bamboo Cabin</span>
<span class="t" style="left:2722.33px;top:508.00px;font-size:21.08px;color:#3c3c3c;transform:scaleX(0.9968);">Yes</span>
<span class="t" style="left:777.93px;top:554.00px;font-size:21.08px;color:#3c3c3c;transform:scaleX(0.9904);">SYSTEM</span>
<span class="t" style="left:994.71px;top:554.00px;font-size:21.08px;color:#3c3c3c;transform:scaleX(1.0468);">Test ASD</span>
<span class="t" style="left:1210.18px;top:554.00px;font-size:21.08px;color:#3c3c3c;transform:scaleX(1.0680);">8185037016351</span>
<span class="t" style="left:1425.25px;top:554.00px;font-size:21.08px;color:#3c3c3c;transform:scaleX(1.0898);">In-House</span>
<span class="t" style="left:1641.72px;top:554.00px;font-size:21.08px;color:#3c3c3c;transform:scaleX(1.1685);">2024-05-23</span>
<span class="t" style="left:1857.76px;top:554.00px;font-size:21.08px;color:#3c3c3c;transform:scaleX(1.1595);">2024-05-24</span>
<span class="t" style="left:2073.79px;top:554.00px;font-size:21.08px;color:#3c3c3c;transform:scaleX(1.1411);">2024-05-23 23:5...</span>
<span class="t" style="left:2289.41px;top:554.00px;font-size:21.08px;color:#3c3c3c;transform:scaleX(0.9954);">BC(1)</span>
<span class="t" style="left:2506.33px;top:554.00px;font-size:21.08px;color:#3c3c3c;transform:scaleX(1.0623);">Bamboo Cabin</span>
<span class="t" style="left:2722.33px;top:554.00px;font-size:21.08px;color:#3c3c3c;transform:scaleX(0.9968);">Yes</span>
<span class="t" style="left:670.25px;top:1343.00px;font-size:25.15px;color:#0b1437;transform:scaleX(1.1326);">Totals</span>
<span class="t" style="left:922.92px;top:1343.00px;font-size:25.15px;color:#b9babf;transform:scaleX(1.0974);">Details</span>
<span class="t" style="left:1161.21px;top:1343.00px;font-size:25.15px;color:#b9babf;transform:scaleX(1.0987);">Transpose</span>
<span class="t" style="left:2298.55px;top:34.00px;font-size:24.71px;color:#0b1437;transform:scaleX(1.1257);">Auto refresh</span>
<span class="t" style="left:2494.54px;top:35.00px;font-size:23.47px;color:#0b1437;-webkit-text-stroke:0.85px #0b1437;transform:scaleX(1.1197);">Run</span>
<span class="t" style="left:2618.60px;top:35.00px;font-size:23.47px;color:#0b1437;-webkit-text-stroke:0.85px #0b1437;transform:scaleX(1.1382);">Save As</span>
<span class="t" style="left:415.06px;top:121.00px;font-size:52.4px;color:#fff;-webkit-text-stroke:1.25px #fff;transform:scaleX(0.9748);z-index:20;">5</span>
<span class="t" style="left:1562.77px;top:115.00px;font-size:52.4px;color:#fff;-webkit-text-stroke:1.25px #fff;z-index:20;">6</span>
<span class="t" style="left:666.16px;top:1254.00px;font-size:52.25px;color:#fff;-webkit-text-stroke:1.25px #fff;transform:scaleX(1.0496);z-index:20;">7</span>
<span class="t" style="left:930.80px;top:1254.00px;font-size:52.25px;color:#fff;-webkit-text-stroke:1.25px #fff;z-index:20;">8</span>
<span class="t" style="left:1183.54px;top:1254.00px;font-size:52.25px;color:#fff;-webkit-text-stroke:1.25px #fff;transform:scaleX(0.9830);z-index:20;">9</span>
<span class="t" style="left:2196.39px;top:151.00px;font-size:52.54px;color:#fff;-webkit-text-stroke:1.25px #fff;transform:scaleX(0.9863);z-index:20;">0</span>
<span class="t" style="left:2573.01px;top:151.00px;font-size:52.54px;color:#fff;-webkit-text-stroke:1.25px #fff;transform:scaleX(0.9958);z-index:20;">2</span>
<span class="t" style="left:2733.80px;top:151.00px;font-size:52.54px;color:#fff;-webkit-text-stroke:1.25px #fff;transform:scaleX(0.9661);z-index:20;">3</span>
</div></body></html>
